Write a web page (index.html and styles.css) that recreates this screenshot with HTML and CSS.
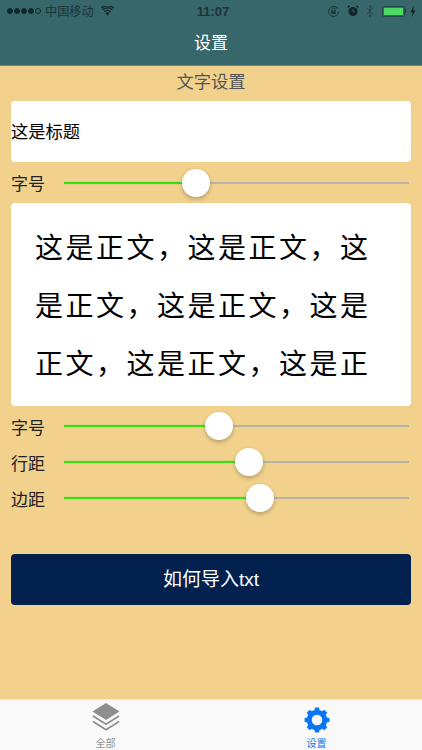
FILE: index.html
```html
<!DOCTYPE html>
<html>

<head>
    <meta charset="utf-8" />
    <title>设置</title>
    <link rel="stylesheet" href="styles.css">
</head>

<body>
    <div class="header">
        <div class="status">
            <div class="status-left">
                <span class="dots"><i></i><i></i><i></i><i></i><i class="empty"></i></span>
                <span class="carrier">中国移动</span>
                <svg class="wifi" width="13" height="10" viewBox="0 0 13 10">
                    <path d="M6.5 9.8 4.400 7.300a3 3 0 0 1 4.200 0Z" fill="#10282b" />
                    <path d="M3.200 5.800a5 5 0 0 1 6.600 0M1.500 3.800a7.600 7.600 0 0 1 10 0M.3 2a9.600 9.600 0 0 1 12.400 0" fill="none" stroke="#10282b" stroke-width="1.300" />
                </svg>
            </div>
            <div class="time">11:07</div>
            <div class="status-right">
                <svg class="lock" width="13" height="13" viewBox="0 0 13 13">
                    <path d="M11.600 6.500a5 5 0 1 1-1.500-3.600" fill="none" stroke="#1d3538" stroke-width="1" />
                    <path d="M10.400 1.400v2.200H8.200Z" fill="#1d3538" />
                    <rect x="4.200" y="5.600" width="4.600" height="3.400" fill="#1d3538" />
                    <path d="M5 5.600V4.600a1.500 1.500 0 0 1 3 0v1" fill="none" stroke="#1d3538" stroke-width=".8" />
                </svg>
                <svg class="alarm" width="12" height="12" viewBox="0 0 12 12">
                    <circle cx="6" cy="6.500" r="4.600" fill="#10282b" />
                    <path d="M.6 2.600 2.600.8M11.400 2.600 9.400.8" stroke="#10282b" stroke-width="1.400" />
                    <path d="M6 4v2.800h2" fill="none" stroke="#37666b" stroke-width=".8" />
                </svg>
                <svg class="bluetooth" width="8" height="14" viewBox="0 0 8 14">
                    <path d="M.8 3.800 6.600 9.900 3.800 13V1l2.800 3.100L.8 10.200" fill="none" stroke="#27494d" stroke-width="1" />
                </svg>
                <div class="battery"><div class="battery-level"></div></div>
                <div class="battery-nub"></div>
                <svg class="bolt" width="6" height="11" viewBox="0 0 6 11">
                    <path d="M3.800 0 .4 6.200h2L1.800 11l3.800-6.600H3.400Z" fill="#10282b" />
                </svg>
            </div>
        </div>
        <div class="nav-title">设置</div>
    </div>

    <div class="content">
        <div class="section-title">文字设置</div>
        <div class="card title-card">这是标题</div>
        <div class="row first-row">
            <span class="label">字号</span>
            <div class="slider"><div class="fill" style="width: 132px"><div class="thumb"></div></div></div>
        </div>
        <div class="card text-card">这是正文，这是正文，这是正文，这是正文，这是正文，这是正文，这是正</div>
        <div class="rows">
            <div class="row">
                <span class="label">字号</span>
                <div class="slider"><div class="fill" style="width: 155px"><div class="thumb"></div></div></div>
            </div>
            <div class="row">
                <span class="label">行距</span>
                <div class="slider"><div class="fill" style="width: 185px"><div class="thumb"></div></div></div>
            </div>
            <div class="row">
                <span class="label">边距</span>
                <div class="slider"><div class="fill" style="width: 196px"><div class="thumb"></div></div></div>
            </div>
        </div>
        <a class="import-btn" href="#">如何导入txt</a>
    </div>

    <div class="tabbar">
        <div class="tab">
            <div class="tab-icon">
                <svg class="layers" width="28" height="28" viewBox="0 0 28 28">
                    <path d="M14 0 27.500 8.500 14 17 .5 8.500Z" fill="#8e8e8e" />
                    <path d="M1 13 14 21.200 27 13M1 18.500 14 26.700 27 18.500" fill="none" stroke="#8e8e8e" stroke-width="1.700" />
                </svg>
            </div>
            <span>全部</span>
        </div>
        <div class="tab active">
            <div class="tab-icon">
                <svg class="gear" width="26" height="26" viewBox="0 0 26 26">
                    <circle cx="13" cy="13" r="7.800" fill="none" stroke="#0a76f6" stroke-width="5" />
                    <g fill="#0a76f6">
                        <path d="M10.200 5.500 10.900.6h4.200l.7 4.900Z" />
                        <path transform="rotate(45 13 13)" d="M10.200 5.500 10.900.6h4.200l.7 4.900Z" />
                        <path transform="rotate(90 13 13)" d="M10.200 5.500 10.900.6h4.200l.7 4.900Z" />
                        <path transform="rotate(135 13 13)" d="M10.200 5.500 10.900.6h4.200l.7 4.900Z" />
                        <path transform="rotate(180 13 13)" d="M10.200 5.500 10.900.6h4.200l.7 4.900Z" />
                        <path transform="rotate(225 13 13)" d="M10.200 5.500 10.900.6h4.200l.7 4.900Z" />
                        <path transform="rotate(270 13 13)" d="M10.200 5.500 10.900.6h4.200l.7 4.900Z" />
                        <path transform="rotate(315 13 13)" d="M10.200 5.500 10.900.6h4.200l.7 4.900Z" />
                    </g>
                </svg>
            </div>
            <span>设置</span>
        </div>
    </div>
</body>

</html>
```

FILE: styles.css
```css
* {
    font-family: "Liberation Sans", "Noto Sans CJK SC", sans-serif;
    box-sizing: border-box;
    padding: 0;
    margin: 0;
}

body {
    width: 422px;
    height: 750px;
    display: flex;
    flex-direction: column;
    background: #f1d18c;
    overflow: hidden;
}

.header {
    height: 66px;
    background: #37666b;
    border-bottom: 1px solid #6f8674;
}

.status {
    height: 22px;
    padding: 0 6px 0 7px;
    display: flex;
    align-items: center;
    justify-content: space-between;
    color: #1d3538;
    font-size: 12.2px;
    position: relative;
}

.status-left,
.status-right {
    display: flex;
    align-items: center;
}

.dots {
    display: flex;
    gap: 1px;
    margin-right: 4px;
}

.dots i {
    width: 6px;
    height: 6px;
    border-radius: 50%;
    background: #10282b;
    border: 1px solid #10282b;
}

.dots i.empty {
    background: none;
    border-width: .5px;
}

.wifi {
    margin-left: 7px;
}

.time {
    position: absolute;
    left: 4px;
    right: 0;
    text-align: center;
    font-size: 13px;
    font-weight: bold;
}

.status-right {
    gap: 7px;
}

.bluetooth {
    margin-right: 1px;
}

.battery {
    width: 23px;
    height: 11px;
    border: 1px solid #27494d;
    border-radius: 2px;
    padding: 1px;
}

.battery-level {
    height: 100%;
    background: #4cd964;
}

.battery-nub {
    width: 1.500px;
    height: 4px;
    margin-left: -7px;
    background: #1d3538;
}

.bolt {
    margin-left: -3px;
}

.nav-title {
    height: 43px;
    line-height: 43px;
    text-align: center;
    color: #fff;
    font-size: 17px;
}

.content {
    flex: 1;
    padding: 0 11px;
}

.section-title {
    height: 35px;
    line-height: 33px;
    text-align: center;
    color: #555;
    font-size: 17.3px;
}

.card {
    background: #fff;
    border-radius: 4px;
    color: #000;
}

.title-card {
    height: 61px;
    line-height: 63px;
    font-size: 17.3px;
}

.row {
    height: 36px;
    display: flex;
    align-items: center;
    padding-right: 2px;
}

.first-row {
    height: 41px;
}

.label {
    width: 53px;
    font-size: 17px;
    color: #222;
}

.slider {
    flex: 1;
    height: 2px;
    background: #b8b5a8;
}

.fill {
    height: 100%;
    background: #35e016;
    box-shadow: 0 0 1px #35e016;
    position: relative;
}

.thumb {
    position: absolute;
    top: -13px;
    right: -14px;
    width: 28px;
    height: 28px;
    border-radius: 50%;
    background: #fff;
    box-shadow: 0 2px 4px rgba(0, 0, 0, .25);
}

.text-card {
    height: 203px;
    padding: 17px 24px 0;
    font-size: 28px;
    line-height: 58px;
    letter-spacing: 2.5px;
}

.rows {
    padding-top: 2px;
}

.import-btn {
    display: block;
    height: 51px;
    margin-top: 38px;
    line-height: 52px;
    text-align: center;
    color: #fff;
    font-size: 19px;
    text-decoration: none;
    background: #02214f;
    border-radius: 4px;
}

.tabbar {
    height: 51px;
    display: flex;
    background: #f9f9f9;
    border-top: 1px solid #f3e6c8;
}

.tab {
    flex: 1;
    display: flex;
    flex-direction: column;
    align-items: center;
    padding-top: 3px;
    font-size: 10px;
    color: #929292;
}

.tab-icon {
    height: 30px;
    display: flex;
    align-items: flex-end;
}

.layers {
    margin-bottom: 2px;
}

.tab span {
    margin-top: 2px;
}

.tab.active {
    color: #0a76f6;
}
```
